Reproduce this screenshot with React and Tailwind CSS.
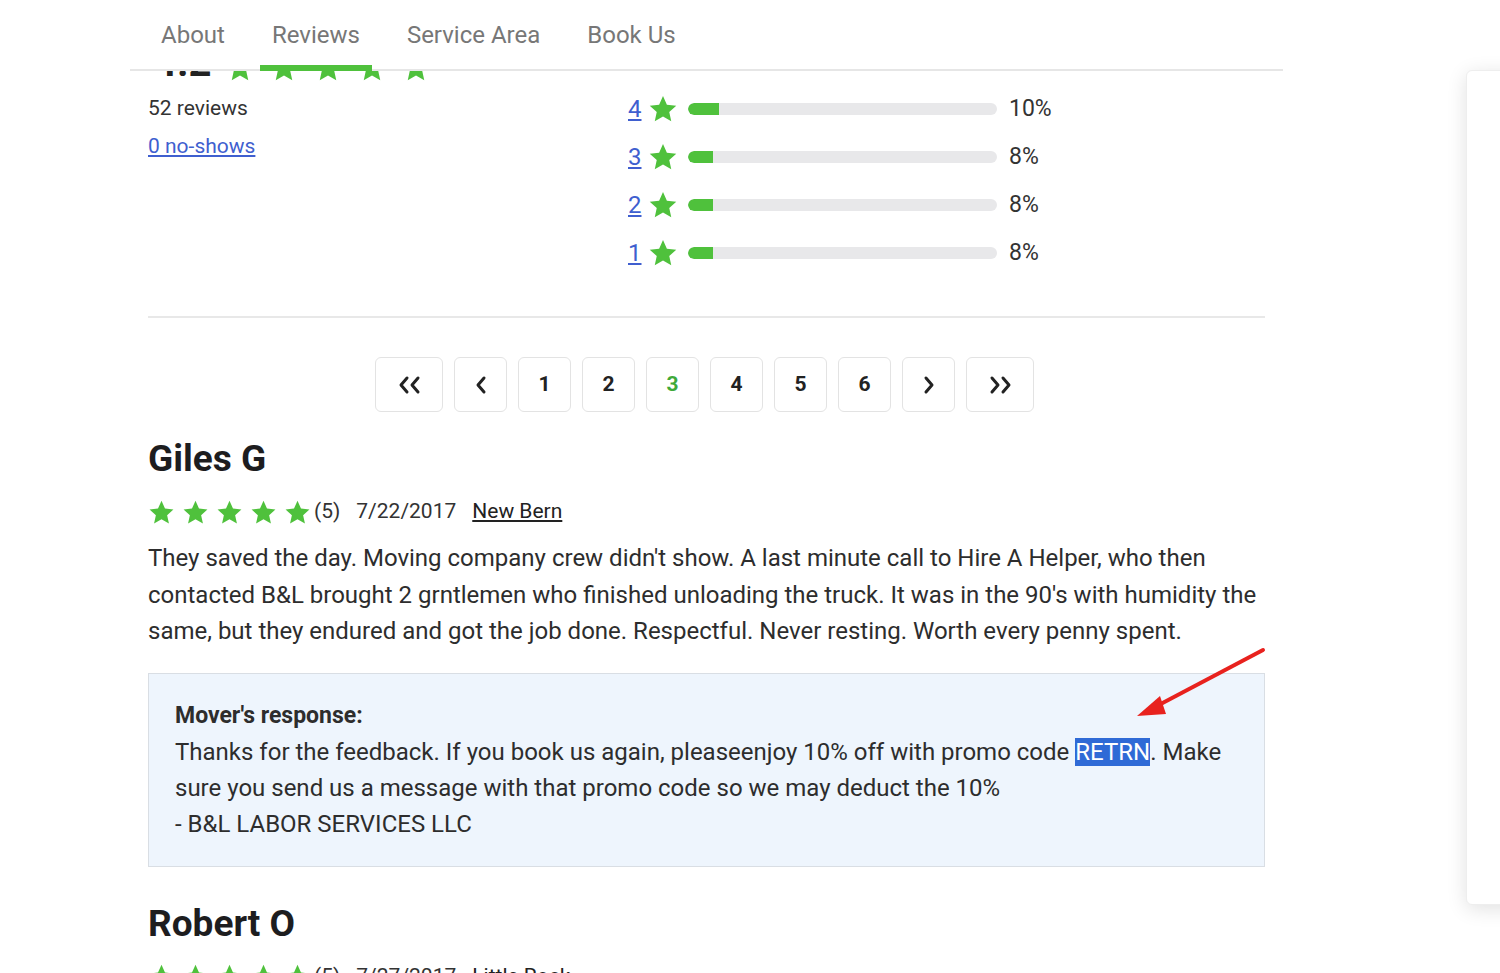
import React from 'react';

const GREEN = '#4fc13c';

const Star = ({ size = 26, className = '' }) => (
  <svg width={size} height={size} viewBox="0 0 24 24" className={className}>
    <path
      d="M12 1.6l3.1 6.9 7.5.8-5.6 5.1 1.6 7.4L12 18l-6.6 3.8L7 14.4 1.4 9.3l7.5-.8z"
      fill={GREEN}
    />
  </svg>
);

const Chevron = ({ dir = 'left', double = false }) => {
  const pts = dir === 'left' ? '9,3 3,10 9,17' : '3,3 9,10 3,17';
  return (
    <svg width={double ? 30 : 14} height="20" viewBox={double ? '0 0 30 20' : '0 0 12 20'} fill="none">
      <polyline points={pts} stroke="#222" strokeWidth="3" strokeLinecap="round" strokeLinejoin="round" transform={double ? 'translate(4 0)' : ''} />
      {double && (
        <polyline points={pts} stroke="#222" strokeWidth="3" strokeLinecap="round" strokeLinejoin="round" transform="translate(15 0)" />
      )}
    </svg>
  );
};

const breakdown = [
  { n: 4, pct: 10 },
  { n: 3, pct: 8 },
  { n: 2, pct: 8 },
  { n: 1, pct: 8 },
];

const tabs = ['About', 'Reviews', 'Service Area', 'Book Us'];

const PageButton = ({ children, active, wide }) => (
  <div
    className={`flex items-center justify-center h-[55px] ${wide ? 'w-[68px]' : 'w-[53px]'} rounded-md border border-[#e3e3e3] bg-white text-[21px] font-bold ${active ? 'text-[#3fa93a]' : 'text-[#222]'}`}
  >
    {children}
  </div>
);

const BarRow = ({ n, pct, className = 'h-[48px] items-center' }) => (
  <div className={`flex ${className}`}>
    <a className="w-[18px] text-[24px] leading-[28px] text-[#3f5fcf] underline">{n}</a>
    <Star size={30} className="ml-[2px]" />
    <div className="ml-[10px] w-[309px] h-[12px] rounded-full bg-[#e8e8ea] overflow-hidden">
      <div className="h-full rounded-l-full bg-[#4fc13c]" style={{ width: `${pct}%` }} />
    </div>
    <span className="ml-[12px] text-[23px] text-[#333]">{pct}%</span>
  </div>
);

const ReviewMeta = ({ date, city }) => (
  <div className="mt-[19px] flex items-center h-[28px] text-[21px] text-[#333]">
    <div className="flex gap-[7px]">
      {[0, 1, 2, 3, 4].map((i) => (
        <Star key={i} size={27} />
      ))}
    </div>
    <span className="ml-[3px]">(5)</span>
    <span className="ml-[16px]">{date}</span>
    <a className="ml-[16px] underline text-[#222]">{city}</a>
  </div>
);

export default function App() {
  return (
    <div
      className="relative w-[1500px] h-[973px] overflow-hidden bg-white flex"
      style={{ fontFamily: 'Roboto, "Noto Sans", sans-serif' }}
    >
      <div className="ml-[130px] w-[1153px] shrink-0">
        {/* sticky tab bar */}
        <div className="relative z-10 h-[71px] bg-white border-b-2 border-[#e6e6e6] flex items-end pl-[19px] gap-[23px]">
          {tabs.map((t) => (
            <div key={t} className="relative h-[69px] px-3 flex items-center text-[24px] text-[#777]">
              <span>{t}</span>
              {t === 'Reviews' && (
                <div className="absolute left-0 right-0 -bottom-[2px] h-[6px] bg-[#4fc13c]" />
              )}
            </div>
          ))}
        </div>

        <div className="-mt-[35px] px-[18px]">
          {/* rating summary */}
          <div className="flex">
            <div className="w-[480px] shrink-0">
              <div className="h-[48px] flex items-end gap-[13px] pb-[1px]">
                <span className="text-[40px] leading-none font-bold text-[#222] pl-[6px]">4.2</span>
                <div className="flex gap-[14px]">
                  {[0, 1, 2, 3, 4].map((i) => (
                    <Star key={i} size={30} />
                  ))}
                </div>
              </div>
              <div className="mt-[12px] text-[21px] text-[#333] leading-[24px]">52 reviews</div>
              <a className="block mt-[14px] text-[21px] text-[#3f5fcf] underline leading-[24px]">0 no-shows</a>
            </div>
            <div className="-mt-[7px]">
              <BarRow n={5} pct={66} className="h-[56px] items-start pt-[10px]" />
              {breakdown.map((r) => (
                <BarRow key={r.n} n={r.n} pct={r.pct} />
              ))}
            </div>
          </div>

          <div className="mt-[39px] border-t-2 border-[#e8e8e8]" />

          {/* pagination */}
          <div className="mt-[39px] flex justify-center gap-[11px] pr-[4px]">
            <PageButton wide><Chevron dir="left" double /></PageButton>
            <PageButton><Chevron dir="left" /></PageButton>
            <PageButton>1</PageButton>
            <PageButton>2</PageButton>
            <PageButton active>3</PageButton>
            <PageButton>4</PageButton>
            <PageButton>5</PageButton>
            <PageButton>6</PageButton>
            <PageButton><Chevron dir="right" /></PageButton>
            <PageButton wide><Chevron dir="right" double /></PageButton>
          </div>

          {/* review 1 */}
          <h2 className="mt-[27px] text-[37px] leading-[40px] font-bold text-[#1d1d1f]">Giles G</h2>
          <ReviewMeta date="7/22/2017" city="New Bern" />
          <p className="mt-[14px] text-[24px] leading-[36.5px] text-[#2d2d2d]">
            They saved the day. Moving company crew didn't show. A last minute call to Hire A Helper, who then
            contacted B&amp;L brought 2 grntlemen who finished unloading the truck. It was in the 90's with humidity the
            same, but they endured and got the job done. Respectful. Never resting. Worth every penny spent.
          </p>

          <div className="mt-[23px] border border-[#d9dee4] bg-[#eef5fd] px-[26px] pt-[24px] pb-[23px] text-[24px] leading-[36.3px] text-[#2d2d2d]">
            <div className="font-bold text-[23px]">Mover's response:</div>
            <div>
              Thanks for the feedback. If you book us again, pleaseenjoy 10% off with promo code{' '}
              <span className="bg-[#2f6ad6] text-white">RETRN</span>. Make sure you send us a message with that promo
              code so we may deduct the 10%
            </div>
            <div>- B&amp;L LABOR SERVICES LLC</div>
          </div>

          {/* review 2 */}
          <h2 className="mt-[37px] text-[37px] leading-[40px] font-bold text-[#1d1d1f]">Robert O</h2>
          <ReviewMeta date="7/27/2017" city="Little Rock" />
        </div>
      </div>

      {/* side card */}
      <div className="ml-[183px] mt-[70px] w-[300px] h-[835px] shrink-0 rounded-md border border-[#eee] bg-white shadow-[0_4px_20px_rgba(0,0,0,0.12)]" />

      {/* annotation arrow */}
      <svg className="absolute left-0 top-0 pointer-events-none" width="1500" height="973">
        <line x1="1263" y1="650" x2="1155" y2="707" stroke="#e8221e" strokeWidth="4" strokeLinecap="round" />
        <polygon points="1137,716 1160,696 1166,714" fill="#e8221e" />
      </svg>
    </div>
  );
}
